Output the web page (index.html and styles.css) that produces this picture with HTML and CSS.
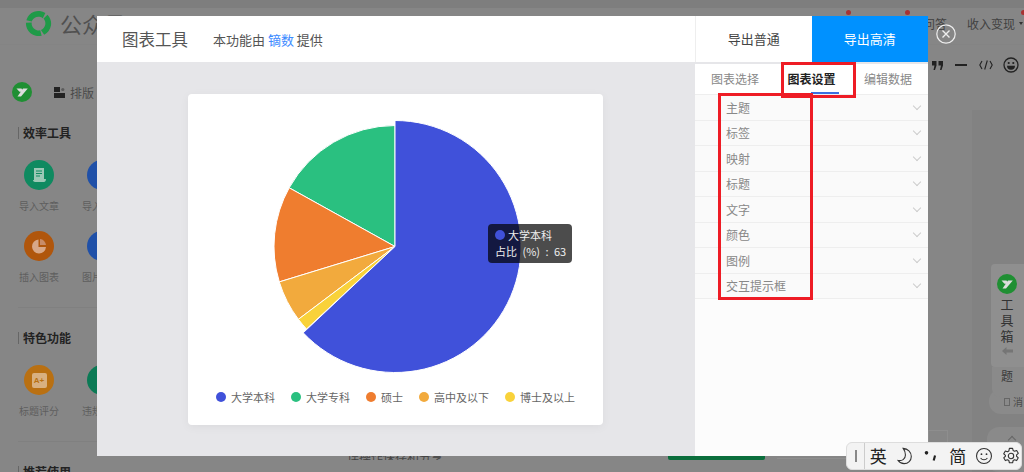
FILE: index.html
```html
<!DOCTYPE html>
<html lang="zh-CN">
<head>
    <meta charset="UTF-8">
    <title>图表工具</title>
    <link rel="stylesheet" href="styles.css">
</head>
<body>
    <div class="page">
        <div class="topbar">
            <div class="brand">
                <svg class="brand-logo" viewBox="0 0 28 28">
                    <g fill="#1f9a48">
                        <path d="M1.400 10.500A13 13 0 0 1 21.100 3.100L18.500 8.500A7.300 7.300 0 0 0 7 12Z"/>
                        <path d="M1.400 10.500A13 13 0 0 1 21.100 3.100L18.500 8.500A7.300 7.300 0 0 0 7 12Z" transform="rotate(120 14 14)"/>
                        <path d="M1.400 10.500A13 13 0 0 1 21.100 3.100L18.500 8.500A7.300 7.300 0 0 0 7 12Z" transform="rotate(240 14 14)"/>
                    </g>
                </svg>
                <span>公众号</span>
            </div>
            <div class="topnav">
                <span>问答</span>
                <span>收入变现</span>
                <i class="nav-caret"></i>
            </div>
        </div>
        <div class="workspace">
            <div class="sidebar">
                <div class="side-head">
                    <svg class="y-badge" viewBox="0 0 20 20">
                        <circle cx="10" cy="10" r="10" fill="#1f8f33"/>
                        <path d="M4.500 6.500H9.500L11.500 9.800H7.500ZM11 6.500H15.800L9 14.500H5.500Z" fill="#ddd"/>
                    </svg>
                    <div class="layout-tab">
                        <svg class="layout-icon" viewBox="0 0 11 11">
                            <rect x="0" y="0" width="6" height="5" fill="#222"/>
                            <circle cx="8.800" cy="2.500" r="1.600" fill="#5a5a5a"/>
                            <rect x="0" y="6" width="11" height="5" fill="#222"/>
                        </svg>
                        排版
                    </div>
                </div>
                <div class="side-title">效率工具</div>
                <div class="tool-grid">
                    <div class="tool">
                        <span class="tool-icon green">
                            <svg viewBox="0 0 16 16"><path d="M3 1h10v11h2c0 2-1 3-2 3H4c-1 0-2-1-2-2h1z" fill="#9cc8b6"/><path d="M5 4h6M5 6.500h6M5 9h4" stroke="#0f8a60" stroke-width="1"/></svg>
                        </span>
                        导入文章
                    </div>
                    <div class="tool">
                        <span class="tool-icon blue"></span>
                        导入文档
                    </div>
                    <div class="tool">
                        <span class="tool-icon orange">
                            <svg viewBox="0 0 16 16"><path d="M7.500 1.500v7.500h7.500A7 7 0 1 1 7.500 1.500z" fill="#d8a888"/><path d="M9 1a6.500 6.500 0 0 1 6 6H9z" fill="#c88c68"/></svg>
                        </span>
                        插入图表
                    </div>
                    <div class="tool">
                        <span class="tool-icon blue"></span>
                        图片工具
                    </div>
                </div>
                <div class="side-line"></div>
                <div class="side-title">特色功能</div>
                <div class="tool-grid">
                    <div class="tool">
                        <span class="tool-icon amber"><span class="doc-badge">A+</span></span>
                        标题评分
                    </div>
                    <div class="tool">
                        <span class="tool-icon teal"></span>
                        违规检测
                    </div>
                </div>
                <div class="side-line"></div>
                <div class="side-title">推荐使用</div>
            </div>
            <div class="editor">
                <div class="edit-tools">
                    <svg class="edit-quote" viewBox="0 0 11 9">
                        <path d="M0 0h4.500v4.500L3 9H1.500L2.500 4.500H0zM6.500 0H11v4.500L9.500 9H8L9 4.500H6.500z" fill="#222"/>
                    </svg>
                    <i class="edit-dash"></i>
                    <svg class="edit-code" viewBox="0 0 14 10">
                        <path d="M3 1L0.800 5L3 9M11 1L13.200 5L11 9M8.300 0.500L5.700 9.500" fill="none" stroke="#222" stroke-width="1.100"/>
                    </svg>
                    <svg class="edit-smile" viewBox="0 0 16 16">
                        <circle cx="8" cy="8" r="7" fill="none" stroke="#222" stroke-width="1.300"/>
                        <circle cx="5.700" cy="6" r="1.100" fill="#222"/>
                        <circle cx="10.300" cy="6" r="1.100" fill="#222"/>
                        <path d="M4 8.800h8a4 4 0 0 1-8 0z" fill="#222"/>
                    </svg>
                </div>
                <div class="edit-rail">
                    <div class="rail-box"></div>
                </div>
            </div>
        </div>
    </div>

    <div class="red-dot dot-a"></div>
    <div class="red-dot dot-b"></div>
    <div class="red-dot dot-c"></div>

    <div class="side-float">
        <div class="float-pill">
            <i class="pill-icon"></i>消
        </div>
        <div class="float-pill lower"><i class="pill-chev"></i></div>
        <div class="float-under">题</div>
        <div class="float-card">
            <svg class="y-badge" viewBox="0 0 20 20">
                <circle cx="10" cy="10" r="10" fill="#1f8f33"/>
                <path d="M4.500 6.500H9.500L11.500 9.800H7.500ZM11 6.500H15.800L9 14.500H5.500Z" fill="#ddd"/>
            </svg>
            <span class="float-label">工具箱</span>
            <svg class="float-arrow" viewBox="0 0 11 8"><path d="M0 4L4.500 0V2.500H11V5.500H4.500V8Z" fill="#757575"/></svg>
        </div>
    </div>

    <div class="modal">
        <div class="modal-head">
            <div class="modal-title">
                <span class="title-main">图表工具</span>
                <span class="title-note">本功能由 <span class="title-link">镝数</span> 提供</span>
            </div>
            <div class="export-btn">导出普通</div>
            <div class="export-btn primary">导出高清</div>
        </div>
        <div class="modal-body">
            <div class="chart-area">
                <div class="chart-card">
                    <svg class="pie" viewBox="188 94 415 280">
                        <g stroke="#fff" stroke-width="1">
                            <path d="M395 246.500L395 125.500A121 121 0 0 0 289.200 187.800Z" fill="#2ac080"/>
                            <path d="M395 246.500L289.200 187.800A121 121 0 0 0 279.300 281.900Z" fill="#ef7d2f"/>
                            <path d="M395 246.500L279.300 281.900A121 121 0 0 0 298.400 319.300Z" fill="#f2aa3d"/>
                            <path d="M395 246.500L298.400 319.300A121 121 0 0 0 306.500 329Z" fill="#f9d23a"/>
                            <path d="M395 246.500L395 120.500A126 126 0 1 1 303.200 332.800Z" fill="#4051da"/>
                        </g>
                    </svg>
                    <div class="legend">
                        <span class="legend-item"><i class="legend-dot c-blue"></i>大学本科</span>
                        <span class="legend-item"><i class="legend-dot c-green"></i>大学专科</span>
                        <span class="legend-item"><i class="legend-dot c-orange"></i>硕士</span>
                        <span class="legend-item"><i class="legend-dot c-amber"></i>高中及以下</span>
                        <span class="legend-item"><i class="legend-dot c-yellow"></i>博士及以上</span>
                    </div>
                    <div class="pie-tip">
                        <div class="tip-row"><i class="tip-dot"></i>大学本科</div>
                        <div class="tip-row tip-value">占比 (%) : 63</div>
                    </div>
                </div>
            </div>
            <div class="side-panel">
                <div class="tabs">
                    <span class="tab">图表选择</span>
                    <span class="tab active">图表设置</span>
                    <span class="tab">编辑数据</span>
                </div>
                <div class="setting-row">主题<i class="chev"></i></div>
                <div class="setting-row">标签<i class="chev"></i></div>
                <div class="setting-row">映射<i class="chev"></i></div>
                <div class="setting-row">标题<i class="chev"></i></div>
                <div class="setting-row">文字<i class="chev"></i></div>
                <div class="setting-row">颜色<i class="chev"></i></div>
                <div class="setting-row">图例<i class="chev"></i></div>
                <div class="setting-row">交互提示框<i class="chev"></i></div>
            </div>
        </div>
        <div class="mark mark-tab"></div>
        <div class="mark mark-list"></div>
    </div>

    <div class="close-btn">
        <svg viewBox="0 0 20 20">
            <circle cx="10" cy="10" r="9.200" fill="none" stroke="#eee" stroke-width="1.200"/>
            <path d="M6.500 6.500l7 7M13.500 6.500l-7 7" stroke="#eee" stroke-width="1.400"/>
        </svg>
    </div>

    <div class="bottom-strip">
        <span class="strip-text">误操作保存和分享</span>
        <span class="strip-green"></span>
        <span class="strip-box"></span>
    </div>

    <div class="ime">
        <span class="ime-grip"><i></i></span>
        <span class="ime-key">英</span>
        <span class="ime-key">
            <svg viewBox="0 0 20 20"><path d="M8 1.500c5 .5 9 4 9 9 0 4.500-3.500 8-8 8-2.800 0-5.200-1.300-6.700-3.500 4.200 .8 8.200-1.500 8.200-6 0-3-1-5.500-2.500-7.500z" fill="none" stroke="#333" stroke-width="1.200"/></svg>
        </span>
        <span class="ime-key">
            <svg viewBox="0 0 20 20"><circle cx="5" cy="6.500" r="2" fill="#222"/><path d="M14.500 9.500L13 15" stroke="#222" stroke-width="2.400"/></svg>
        </span>
        <span class="ime-key">简</span>
        <span class="ime-key">
            <svg viewBox="0 0 20 20"><circle cx="10" cy="10" r="8.300" fill="none" stroke="#333" stroke-width="1.200"/><circle cx="7.200" cy="8" r="1" fill="#333"/><circle cx="12.800" cy="8" r="1" fill="#333"/><path d="M6.200 12.200c2 2.600 5.600 2.600 7.600 0" fill="none" stroke="#333" stroke-width="1.200"/></svg>
        </span>
        <span class="ime-key">
            <svg viewBox="0 0 20 20"><path d="M8.200 1.500h3.600l.6 2.500 1.500.8 2.400-.9 1.800 3.100-1.900 1.700v1.600l1.900 1.700-1.800 3.100-2.400-.9-1.500.8-.6 2.500H8.200l-.6-2.500-1.500-.8-2.400.9-1.800-3.100 1.900-1.700V9.200L1.900 7.500l1.800-3.100 2.400.9 1.500-.8z" fill="none" stroke="#333" stroke-width="1.200" stroke-linejoin="round"/><circle cx="10" cy="10" r="3" fill="none" stroke="#333" stroke-width="1.200"/></svg>
        </span>
    </div>
</body>
</html>
```

FILE: styles.css
```css
* {
    box-sizing: border-box;
}
body {
    margin: 0;
    width: 1024px;
    height: 472px;
    overflow: hidden;
    position: relative;
    background: #868686;
    color: #333;
    font-family: "Noto Sans CJK SC", "Noto Sans", sans-serif;
}
i {
    font-style: normal;
}

/* page behind the dialog, already dimmed */
.page {
    display: flex;
    flex-direction: column;
    height: 100%;
}
.topbar {
    display: flex;
    flex: none;
    justify-content: space-between;
    height: 45px;
    padding-left: 25px;
    border-top: 8px solid #7e7e7e;
    border-bottom: 1px solid #848484;
}
.brand {
    display: flex;
    align-items: center;
    gap: 8px;
    height: 30px;
    font-size: 22px;
    color: #505050;
}
.brand-logo {
    width: 27px;
    height: 27px;
}
.topnav {
    display: flex;
    align-items: center;
    gap: 20px;
    height: 30px;
    padding-right: 1px;
    font-size: 12px;
    color: #414141;
}
.nav-caret {
    width: 0;
    height: 0;
    margin-left: -16px;
    border: 2px solid transparent;
    border-top: 3px solid #333;
    border-bottom: 0;
}
.workspace {
    display: flex;
    flex: 1;
    min-height: 0;
}
.sidebar {
    width: 200px;
    padding-left: 18px;
}
.side-head {
    display: flex;
    align-items: center;
    gap: 22px;
    height: 30px;
    margin: 32px 0 0 -6px;
}
.y-badge {
    flex: none;
    width: 20px;
    height: 20px;
}
.layout-tab {
    display: flex;
    align-items: center;
    gap: 5px;
    font-size: 12px;
    color: #4a4a4a;
}
.layout-icon {
    width: 11px;
    height: 11px;
}
.side-title {
    margin-top: 24px;
    padding-left: 4px;
    border-left: 1px solid #666;
    height: 12px;
    font-size: 12px;
    font-weight: 700;
    line-height: 12px;
    color: #222;
}
.side-head + .side-title {
    margin-top: 20px;
}
.tool-grid {
    display: grid;
    grid-template-columns: 63px 63px;
    row-gap: 18px;
    margin-top: 21px;
}
.tool {
    display: flex;
    flex-direction: column;
    align-items: center;
    gap: 8px;
    width: 42px;
    font-size: 10px;
    line-height: 15px;
    white-space: nowrap;
    color: #5e5e5e;
}
.tool-icon {
    display: flex;
    align-items: center;
    justify-content: center;
    width: 30px;
    height: 30px;
    border-radius: 50%;
}
.tool-icon svg {
    width: 16px;
    height: 16px;
}
.tool-icon.green { background: #0f8a60; }
.tool-icon.blue { background: #1f50a8; }
.tool-icon.orange { background: #b0560c; }
.tool-icon.amber { background: #b97012; }
.tool-icon.teal { background: #0b7a55; }
.doc-badge {
    width: 15px;
    height: 15px;
    border-radius: 2px;
    background: #d8b080;
    color: #b97012;
    font: bold 8px/15px "Liberation Sans", sans-serif;
    text-align: center;
}
.side-line {
    height: 1px;
    margin-top: 23px;
    background: #808080;
}
.editor {
    flex: 1;
    display: flex;
    flex-direction: column;
}
.edit-tools {
    display: flex;
    align-items: center;
    justify-content: flex-end;
    gap: 12px;
    height: 16px;
    margin-top: 12px;
    padding-right: 5px;
}
.edit-quote {
    width: 11px;
    height: 9px;
}
.edit-dash {
    width: 12px;
    height: 2px;
    background: #222;
}
.edit-code {
    width: 14px;
    height: 10px;
}
.edit-smile {
    width: 16px;
    height: 16px;
    margin-left: -2px;
}
.edit-rail {
    flex: 1;
    position: relative;
    margin: 37px 0 0 772px;
    background: #828282;
}
.rail-box {
    position: absolute;
    left: -44px;
    top: 320px;
    width: 20px;
    height: 26px;
    border: 1px solid #8e8e8e;
}

.red-dot {
    position: absolute;
    top: 10px;
    width: 5px;
    height: 5px;
    border-radius: 50%;
    background: #a83232;
}
.dot-a { left: 846px; }
.dot-b { left: 905px; }
.dot-c { left: 1021px; }

/* floating toolbox on the right edge */
.side-float {
    position: absolute;
    left: 987px;
    top: 264px;
    width: 37px;
    height: 208px;
}
.float-card {
    position: absolute;
    left: 4px;
    top: 0;
    width: 33px;
    height: 103px;
    display: flex;
    flex-direction: column;
    align-items: center;
    padding: 10px 1px 0 0;
    background: #8f8f8f;
    border-radius: 4px 0 0 4px;
    color: #333;
}
.float-label {
    margin-top: 4px;
    writing-mode: vertical-rl;
    font-size: 13px;
    line-height: 15px;
    letter-spacing: 3px;
}
.float-arrow {
    width: 11px;
    height: 8px;
    margin-top: 1px;
}
.float-under {
    position: absolute;
    left: 5px;
    top: 103px;
    width: 32px;
    height: 30px;
    padding: 0 0 0 9px;
    border-radius: 0 0 0 8px;
    background: #8a8a8a;
    font-size: 12px;
    line-height: 18px;
    color: #3a3a3a;
}
.float-pill {
    position: absolute;
    left: 2px;
    top: 125px;
    width: 35px;
    height: 25px;
    display: flex;
    align-items: center;
    gap: 3px;
    padding: 0 0 0 15px;
    border-radius: 12px 0 0 12px;
    background: #8a8a8a;
    font-size: 10px;
    white-space: nowrap;
    color: #4a4a4a;
    overflow: hidden;
}
.float-pill.lower {
    top: 163px;
    left: 0;
    width: 37px;
    height: 45px;
    align-items: flex-start;
    padding: 10px 0 0 22px;
}
.pill-icon {
    flex: none;
    width: 6px;
    height: 8px;
    border: 1px solid #666;
}
.pill-chev {
    width: 6px;
    height: 6px;
    border-left: 1px solid #666;
    border-top: 1px solid #666;
    transform: rotate(45deg);
}

/* dialog */
.modal {
    position: absolute;
    left: 97px;
    top: 16px;
    width: 831px;
    height: 440px;
    display: flex;
    flex-direction: column;
    background: #e6e6e9;
}
.modal-head {
    display: flex;
    flex: none;
    height: 46px;
    background: #fff;
}
.modal-title {
    flex: 1;
    display: flex;
    align-items: center;
    gap: 25px;
    padding-left: 25px;
    color: #555;
}
.title-main {
    font-size: 16.500px;
}
.title-note {
    font-size: 13px;
}
.title-link {
    color: #3d8bff;
}
.export-btn {
    width: 116.500px;
    border-left: 1px solid #eee;
    text-align: center;
    font-size: 13px;
    line-height: 46px;
    color: #444;
}
.export-btn.primary {
    border-left: 0;
    background: #0091ff;
    color: #fff;
}
.modal-body {
    flex: 1;
    display: flex;
}
.chart-area {
    flex: 1;
    display: flex;
    align-items: center;
    justify-content: center;
    padding-right: 1px;
}
.chart-card {
    position: relative;
    width: 415px;
    height: 331px;
    background: #fff;
    border-radius: 4px;
    box-shadow: 0 2px 10px rgba(0, 0, 0, 0.05);
}
.pie {
    display: block;
    width: 415px;
    height: 280px;
}
.legend {
    display: flex;
    justify-content: center;
    gap: 16px;
    margin-top: 15px;
    font-size: 11px;
    line-height: 16px;
    color: #666;
}
.legend-item {
    display: flex;
    align-items: center;
    gap: 5px;
}
.legend-dot {
    width: 10px;
    height: 10px;
    border-radius: 50%;
}
.c-blue { background: #4051da; }
.c-green { background: #2ac080; }
.c-orange { background: #ef7d2f; }
.c-amber { background: #f2aa3d; }
.c-yellow { background: #f9d23a; }
.pie-tip {
    position: absolute;
    left: 300px;
    top: 130px;
    width: 84px;
    height: 39px;
    padding: 3px 0 0 7px;
    border-radius: 4px;
    background: rgba(0, 0, 0, 0.7);
    color: #eee;
    font-size: 11px;
    line-height: 16px;
}
.tip-row {
    display: flex;
    align-items: center;
    gap: 3px;
}
.tip-value {
    white-space: pre;
    word-spacing: 3px;
}
.tip-dot {
    width: 10px;
    height: 10px;
    border-radius: 50%;
    background: #4051da;
}

/* right side settings */
.side-panel {
    width: 233px;
    margin-top: 2px;
    background: #fcfcfc;
}
.tabs {
    display: flex;
    justify-content: space-between;
    height: 31px;
    padding: 0 16px;
    background: #fff;
    border-bottom: 1px solid #eee;
    font-size: 12px;
    line-height: 30px;
    color: #888;
}
.tab {
    position: relative;
}
.tab.active {
    color: #222;
    font-weight: 700;
}
.tab.active::after {
    content: "";
    position: absolute;
    left: 24px;
    right: -3px;
    bottom: 0;
    height: 2px;
    background: #3a6fe0;
}
.setting-row {
    display: flex;
    align-items: center;
    justify-content: space-between;
    height: 25.500px;
    padding: 0 8px 0 31px;
    border-bottom: 1px solid #eee;
    background: #fafafa;
    font-size: 12px;
    color: #888;
}
.chev {
    width: 6px;
    height: 6px;
    margin-top: -3px;
    border-right: 1px solid #ccc;
    border-bottom: 1px solid #ccc;
    transform: rotate(45deg);
}
.mark {
    position: absolute;
    border: 3px solid #ee1c25;
}
.mark-tab {
    left: 684px;
    top: 46px;
    width: 75px;
    height: 36px;
}
.mark-list {
    left: 621px;
    top: 77px;
    width: 95px;
    height: 207px;
}

.close-btn {
    position: absolute;
    left: 936px;
    top: 24px;
    width: 20px;
    height: 20px;
}
.close-btn svg {
    display: block;
}
.bottom-strip {
    position: absolute;
    left: 347px;
    top: 450px;
    width: 500px;
    height: 10px;
    font-size: 12px;
    line-height: 14px;
    color: #444;
    clip-path: inset(6px 0 0 0);
}
.strip-green {
    position: absolute;
    left: 321px;
    top: 6px;
    width: 97px;
    height: 4px;
    border-radius: 0 0 2px 2px;
    background: #0b6e3c;
}
.strip-box {
    position: absolute;
    left: 430px;
    top: 6px;
    width: 70px;
    height: 3px;
    border-bottom: 1px solid #8e8e8e;
}

/* input method bar sits above everything */
.ime {
    position: absolute;
    left: 846px;
    top: 442px;
    width: 176px;
    height: 28px;
    display: flex;
    align-items: center;
    border-radius: 6px;
    background: #f3f3f3;
    border: 1px solid #ddd;
    color: #222;
}
.ime-grip {
    display: flex;
    align-items: center;
    justify-content: center;
    flex: none;
    width: 18px;
    height: 100%;
    border-right: 1px solid #ccc;
}
.ime-grip i {
    width: 2px;
    height: 12px;
    background: #888;
}
.ime-key {
    display: flex;
    align-items: center;
    justify-content: center;
    flex: none;
    width: 26.500px;
    font-size: 17px;
    line-height: 26px;
}
.ime-key svg {
    width: 18px;
    height: 18px;
}
```
